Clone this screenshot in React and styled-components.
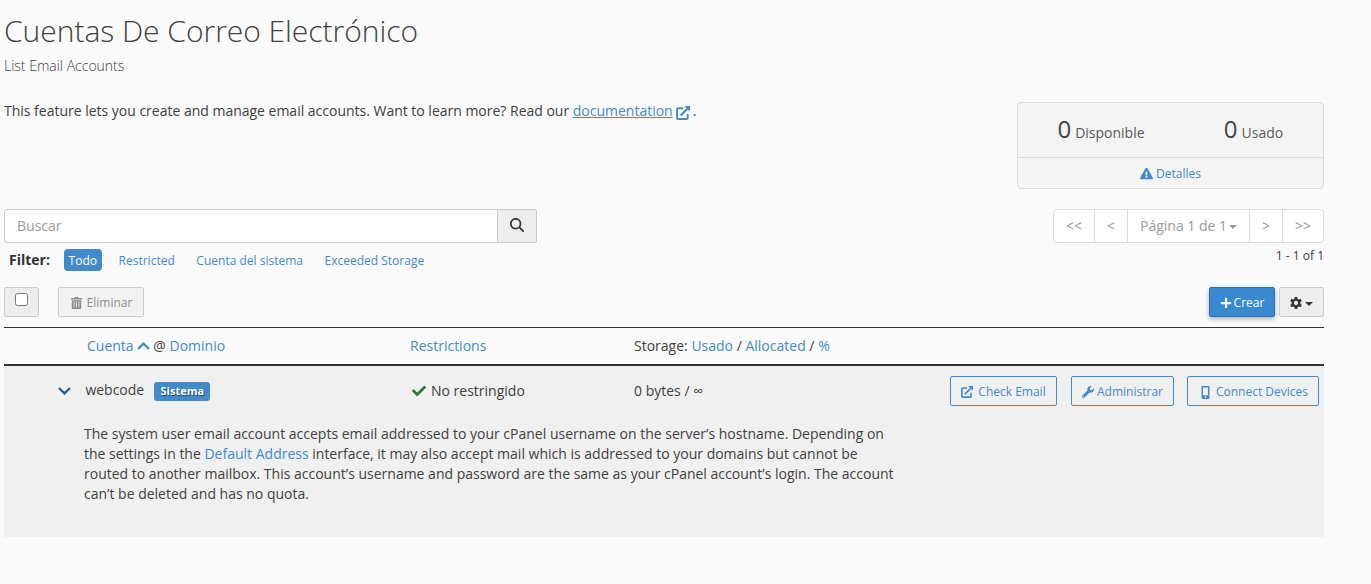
import React from "react";
import styled, { createGlobalStyle, css } from "styled-components";
import {
  FaExclamationTriangle,
  FaPlus,
  FaWrench,
  FaCheck,
} from "react-icons/fa";
import { FaMagnifyingGlass } from "react-icons/fa6";

const GlobalStyle = createGlobalStyle`
  *, *::before, *::after { box-sizing: border-box; }
  body {
    margin: 0;
    background: #fafafa;
    color: #404040;
    font: 14px/20px "Open Sans", sans-serif;
  }
  svg { display: block; flex: none; }
`;

const Page = styled.main`
  width: 1324px;
  padding: 11px 0 0 4px;
`;
const Title = styled.h1`
  margin: 0;
  font-size: 30px;
  line-height: 40px;
  font-weight: 300;
  letter-spacing: -0.03px;
`;
const Subtitle = styled.div`
  margin-top: 5px;
  font-weight: 300;
`;
const Intro = styled.div`
  display: flex;
  justify-content: space-between;
  align-items: flex-start;
  margin-top: 26px;
  height: 107px;
`;
const IntroText = styled.p`
  display: flex;
  margin: -1px 0 0;
  white-space: pre;
  letter-spacing: -0.01px;
`;
const Link = styled.a`
  color: #428bca;
  text-decoration: ${(p) => (p.$underlined ? "underline" : "none")};
`;
const DocIcon = styled.span`
  color: #428bca;
  margin: 5px 3px 0 3px;
`;

const StatsCard = styled.section`
  width: 307px;
  height: 87px;
  border: 1px solid #ddd;
  border-radius: 4px;
  background: #f4f4f4;
`;
const Stats = styled.div`
  display: grid;
  grid-template-columns: 166px 139px;
  height: 55px;
  border-bottom: 1px solid #ddd;
`;
const Stat = styled.div`
  display: flex;
  justify-content: center;
  align-items: baseline;
  gap: 4px;
  padding-top: 16px;
  color: #5a5a5a;
`;
const StatNumber = styled.span`
  font-size: 24px;
  color: #444;
`;
const Details = styled.div`
  display: flex;
  justify-content: center;
  align-items: center;
  gap: 3px;
  height: 31px;
  font-size: 12px;
  color: #428bca;
`;

const Row = styled.div`
  display: flex;
  justify-content: space-between;
  align-items: flex-start;
`;
const SearchGroup = styled.div`
  display: flex;
  width: 533px;
  height: 34px;
`;
const SearchInput = styled.input`
  width: 494px;
  padding: 0 12px;
  border: 1px solid #ccc;
  border-right: 0;
  border-radius: 4px 0 0 4px;
  background: #fff;
  font: inherit;
  outline: 0;
  &::placeholder { color: #999; opacity: 1; }
`;
const SearchButton = styled.button`
  display: flex;
  justify-content: center;
  align-items: center;
  width: 40px;
  margin-left: -1px;
  padding: 0 0 2px;
  border: 1px solid #ccc;
  border-radius: 0 2px 2px 0;
  background: #eee;
  color: #333;
`;
const Filters = styled.div`
  display: flex;
  align-items: center;
  height: 22px;
  margin-top: 6px;
  padding-left: 5px;
  font-size: 12px;
`;
const FilterLabel = styled.strong`
  width: 55px;
  font-size: 14px;
  font-weight: 700;
  color: #333;
`;
const Filter = styled.a`
  height: 22px;
  line-height: 23px;
  margin-right: 12px;
  padding: 0 5px 0 4.6px;
  border-radius: 4px;
  color: ${(p) => (p.$active ? "#fff" : "#428bca")};
  background: ${(p) => (p.$active ? "#428bca" : "transparent")};
`;

const Pager = styled.div`
  display: flex;
  height: 34px;
  border: 1px solid #ddd;
  border-radius: 4px;
  background: #fff;
  color: #999;
`;
const PagerItem = styled.span`
  display: flex;
  align-items: center;
  justify-content: center;
  gap: 2px;
  width: ${(p) => p.$width}px;
  & + & { border-left: 1px solid #ddd; }
`;
const Caret = styled.span`
  width: 8px;
  margin-top: 2px;
  border: 4px solid transparent;
  border-top-color: currentColor;
  border-bottom: 0;
`;
const Count = styled.div`
  margin-top: 3px;
  font-size: 12px;
  text-align: right;
`;

const Toolbar = styled(Row)`
  height: 40px;
  margin-top: 16px;
`;
const ButtonSet = styled.div`
  display: flex;
  gap: ${(p) => p.$gap}px;
`;
const variants = {
  plain: css`
    border-color: #ccc;
    background: #eee;
    color: #333;
  `,
  muted: css`
    border-color: #ccc;
    background: #f2f2f2;
    color: #8c8c8c;
  `,
  primary: css`
    border-color: #2a6fb0;
    background: #3889d0;
    color: #fff;
    box-shadow: 0 2px 5px rgba(0, 0, 0, 0.3);
  `,
  outline: css`
    border-color: #428bca;
    background: transparent;
    color: #428bca;
  `,
};
const Button = styled.button`
  display: flex;
  justify-content: center;
  align-items: center;
  gap: ${(p) => p.$gap ?? 4}px;
  width: ${(p) => p.$width}px;
  height: 30px;
  padding: 2px 0 0 ${(p) => p.$indent ?? 0}px;
  border: 1px solid;
  border-radius: 2px;
  font: 12px/18px "Open Sans", sans-serif;
  white-space: nowrap;
  ${(p) => variants[p.$variant]}
`;
const Checkbox = styled.input`
  width: 13px;
  height: 13px;
  margin: 0 0 7px;
`;

const TableHead = styled.div`
  display: grid;
  grid-template-columns: 83px 323px 224px 1fr;
  align-items: center;
  height: 39px;
  border-top: 1px solid #333;
  border-bottom: 2px solid #333;
`;
const HeadCell = styled.div`
  display: flex;
  align-items: center;
  white-space: pre;
`;
const SortIcon = styled.span`
  margin: 0 3.5px 0 3.2px;
  color: #428bca;
`;
const Account = styled.article`
  height: 171px;
  background: #f0f0f0;
`;
const AccountRow = styled.div`
  display: grid;
  grid-template-columns: 54px 27px 327px 222px 1fr;
  height: 58px;
  padding-top: 10px;
`;
const Cell = styled.div`
  display: flex;
  align-items: center;
  height: 30px;
  gap: ${(p) => p.$gap ?? 0}px;
  color: ${(p) => p.$color ?? "inherit"};
`;
const AccountName = styled.span`
  margin: -2px 0 0 0.4px;
`;
const Badge = styled.span`
  height: 19px;
  padding: 0 6.3px;
  border-radius: 3px;
  background: #428bca;
  color: #fff;
  font-size: 11px;
  line-height: 18px;
  font-weight: 700;
  text-shadow: 1px 1px 1px rgba(0, 0, 0, 0.5);
`;
const Actions = styled.div`
  display: flex;
  justify-content: flex-end;
  padding-right: 5px;
  gap: 13px;
  & > :first-child { margin-right: 1px; }
`;
const Description = styled.p`
  margin: 0 0 0 80px;
  white-space: nowrap;
`;

const Chevron = ({ up }) => (
  <svg width="13" height="8" viewBox="0 0 13 8" fill="none" stroke="currentColor" strokeWidth="2.3">
    <path d={up ? "M1 7 6.5 1.7 12 7" : "M1 1 6.5 6.3 12 1"} />
  </svg>
);
const ExternalLink = ({ size }) => (
  <svg width={size} height={size} viewBox="0 0 14 14" fill="none" stroke="currentColor" strokeWidth="1.9">
    <path d="M7.2 2.3H2A1 1 0 0 0 1 3.3V12a1 1 0 0 0 1 1h8.7a1 1 0 0 0 1-1V8" />
    <path d="M4.6 9.4 11.6 2.4" strokeWidth="2.1" />
    <path d="M8.6 0H14v5.4z" fill="currentColor" stroke="none" />
  </svg>
);
const Gear = () => (
  <svg width="12" height="12" viewBox="0 0 12 12" fill="none" stroke="currentColor">
    <circle cx="6" cy="6" r="3.3" strokeWidth="2.3" />
    <g strokeWidth="2.6">
      <path d="M6 0v2.4M6 9.6V12" />
      <path d="M6 0v2.4M6 9.6V12" transform="rotate(60 6 6)" />
      <path d="M6 0v2.4M6 9.6V12" transform="rotate(120 6 6)" />
    </g>
  </svg>
);
const Trash = () => (
  <svg width="11" height="12" viewBox="0 0 11 12" fill="currentColor">
    <path fillRule="evenodd" d="M0 1h3.2L4 0h3l.8 1H11v1.5H0zM.8 3.2h9.4V11a1 1 0 0 1-1 1H1.8a1 1 0 0 1-1-1zM2.7 4.5v6h.8v-6zm2.4 0v6h.8v-6zm2.4 0v6h.8v-6z" />
  </svg>
);
const Phone = () => (
  <svg width="9" height="13" viewBox="0 0 9 13" fill="currentColor">
    <path fillRule="evenodd" d="M1.7 0h5.6A1.2 1.2 0 0 1 8.5 1.2v10.6A1.2 1.2 0 0 1 7.3 13H1.7A1.2 1.2 0 0 1 .5 11.8V1.2A1.2 1.2 0 0 1 1.7 0zm.3 1.6v7.6h5V1.6zM4.5 10.3a.8.8 0 1 0 0 1.6.8.8 0 0 0 0-1.6z" />
  </svg>
);

export default function App() {
  return (
    <Page>
      <GlobalStyle />
      <Title>Cuentas De Correo Electrónico</Title>
      <Subtitle>List Email Accounts</Subtitle>
      <Intro>
        <IntroText>
          <span>This feature lets you create and manage email accounts. Want to learn more? Read our </span>
          <Link $underlined>documentation</Link>
          <DocIcon><ExternalLink size={14} /></DocIcon>
          <span>.</span>
        </IntroText>
        <StatsCard>
          <Stats>
            <Stat><StatNumber>0</StatNumber>Disponible</Stat>
            <Stat><StatNumber>0</StatNumber>Usado</Stat>
          </Stats>
          <Details><FaExclamationTriangle size={13} />Detalles</Details>
        </StatsCard>
      </Intro>

      <Row>
        <div>
          <SearchGroup>
            <SearchInput placeholder="Buscar" />
            <SearchButton aria-label="Buscar"><FaMagnifyingGlass size={14} /></SearchButton>
          </SearchGroup>
          <Filters>
            <FilterLabel>Filter:</FilterLabel>
            <Filter $active>Todo</Filter>
            <Filter>Restricted</Filter>
            <Filter>Cuenta del sistema</Filter>
            <Filter>Exceeded Storage</Filter>
          </Filters>
        </div>
        <div>
          <Pager>
            <PagerItem $width={40}>&lt;&lt;</PagerItem>
            <PagerItem $width={33}>&lt;</PagerItem>
            <PagerItem $width={122}>Página 1 de 1<Caret /></PagerItem>
            <PagerItem $width={33}>&gt;</PagerItem>
            <PagerItem $width={41}>&gt;&gt;</PagerItem>
          </Pager>
          <Count>1 - 1 of 1</Count>
        </div>
      </Row>

      <Toolbar>
        <ButtonSet $gap={19}>
          <Button $variant="plain" $width={35}><Checkbox type="checkbox" /></Button>
          <Button $variant="muted" $width={86} $gap={5} $indent={1}><Trash />Eliminar</Button>
        </ButtonSet>
        <ButtonSet $gap={4}>
          <Button $variant="primary" $width={66} $gap={2}><FaPlus size={12} />Crear</Button>
          <Button $variant="plain" $width={45} $gap={3}><Gear /><Caret /></Button>
        </ButtonSet>
      </Toolbar>

      <TableHead>
        <span />
        <HeadCell>
          <Link>Cuenta</Link>
          <SortIcon><Chevron up /></SortIcon>
          @ <Link>Dominio</Link>
        </HeadCell>
        <HeadCell><Link>Restrictions</Link></HeadCell>
        <HeadCell>
          Storage: <Link>Usado</Link> / <Link>Allocated</Link> / <Link>%</Link>
        </HeadCell>
      </TableHead>

      <Account>
        <AccountRow>
          <Cell />
          <Cell $color="#1f6097"><Chevron /></Cell>
          <Cell $gap={10}>
            <AccountName>webcode</AccountName>
            <Badge>Sistema</Badge>
          </Cell>
          <Cell $gap={5}><FaCheck size={14} color="#36783a" />No restringido</Cell>
          <Row>
            <Cell>0 bytes / ∞</Cell>
            <Actions>
              <Button $variant="outline" $width={107} $gap={5}><ExternalLink size={12} />Check Email</Button>
              <Button $variant="outline" $width={103} $gap={3}><FaWrench size={12} />Administrar</Button>
              <Button $variant="outline" $width={132} $gap={6} $indent={3}><Phone />Connect Devices</Button>
            </Actions>
          </Row>
        </AccountRow>
        <Description>
          The system user email account accepts email addressed to your cPanel username on the server’s hostname. Depending on
          <br />
          the settings in the <Link>Default Address</Link> interface, it may also accept mail which is addressed to your domains but cannot be
          <br />
          routed to another mailbox. This account’s username and password are the same as your cPanel account’s login. The account
          <br />
          can’t be deleted and has no quota.
        </Description>
      </Account>
    </Page>
  );
}
